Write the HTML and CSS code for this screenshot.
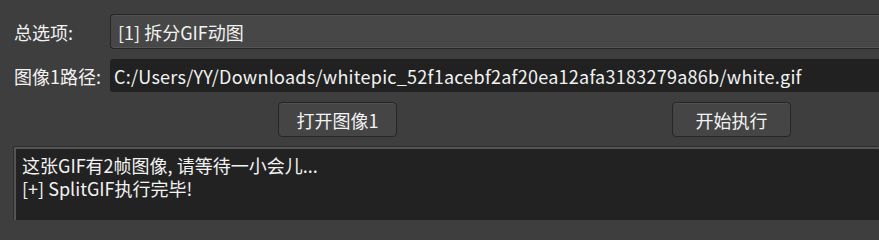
FILE: index.html
```html
<!DOCTYPE html>
<html lang="zh-CN">
<head>
<meta charset="utf-8">
<link rel="stylesheet" href="styles.css">
</head>
<body>
<div class="app">
  <div class="row row-combo">
    <label class="label">总选项:</label>
    <div class="combo">[1] 拆分GIF动图</div>
  </div>
  <div class="row row-path">
    <label class="label">图像1路径:</label>
    <div class="input">C:/Users/YY/Downloads/whitepic_52f1acebf2af20ea12afa3183279a86b/white.gif</div>
  </div>
  <div class="buttons">
    <button class="btn btn-open">打开图像1</button>
    <button class="btn btn-run">开始执行</button>
  </div>
  <div class="log">
    <div class="log-line">这张GIF有2帧图像, 请等待一小会儿...</div>
    <div class="log-line">[+] SplitGIF执行完毕!</div>
  </div>
</div>
</body>
</html>
```

FILE: styles.css
```css
html, body {
  margin: 0;
  padding: 0;
  background: #3e3e3e;
  overflow: hidden;
}
body {
  font-family: "Noto Sans CJK SC", "Noto Sans", sans-serif;
  font-size: 18px;
  color: #f2f2f2;
  width: 879px;
  height: 220px;
}
.app {
  padding: 14px 0 0 14px;
  display: flex;
  flex-direction: column;
}
.row {
  display: flex;
  align-items: center;
}
.label {
  width: 96px;
  flex: none;
  white-space: nowrap;
}
.combo {
  flex: 1;
  height: 35px;
  box-sizing: border-box;
  border: 1px solid #262626;
  border-right: none;
  border-radius: 4px 0 0 4px;
  background: #474747;
  box-shadow: inset 0 1px 0 #525252, inset 0 -1px 0 #555;
  padding-left: 7px;
  display: flex;
  align-items: center;
  line-height: 1;
}
.row-path {
  margin-top: 10px;
}
.input {
  flex: 1;
  min-width: 0;
  overflow: hidden;
  height: 33px;
  box-sizing: border-box;
  background: #212121;
  border-radius: 3px 0 0 3px;
  padding-left: 4px;
  display: flex;
  align-items: center;
  white-space: nowrap;
  line-height: 1;
  letter-spacing: 0.25px;
}
.buttons {
  display: flex;
  margin-top: 10px;
  padding-left: 264px;
  gap: 275px;
}
.btn {
  width: 119px;
  height: 35px;
  box-sizing: border-box;
  border: 1px solid #262626;
  border-radius: 4px;
  background: #454545;
  box-shadow: inset 0 1px 0 #4f4f4f;
  color: #f2f2f2;
  font-family: inherit;
  font-size: 18px;
  padding: 0;
  line-height: 1;
}
.log {
  margin-top: 10px;
  height: 100px;
  box-sizing: border-box;
  border-top: 2px solid #545454;
  border-left: 2px solid #545454;
  box-shadow: -1px -1px 0 #2e2e2e;
  background: #222222;
  padding: 5px 0 0 6px;
  white-space: nowrap;
  display: flex;
  flex-direction: column;
  align-items: flex-start;
}
.log-line {
  line-height: 23px;
  height: 23px;
}
```
